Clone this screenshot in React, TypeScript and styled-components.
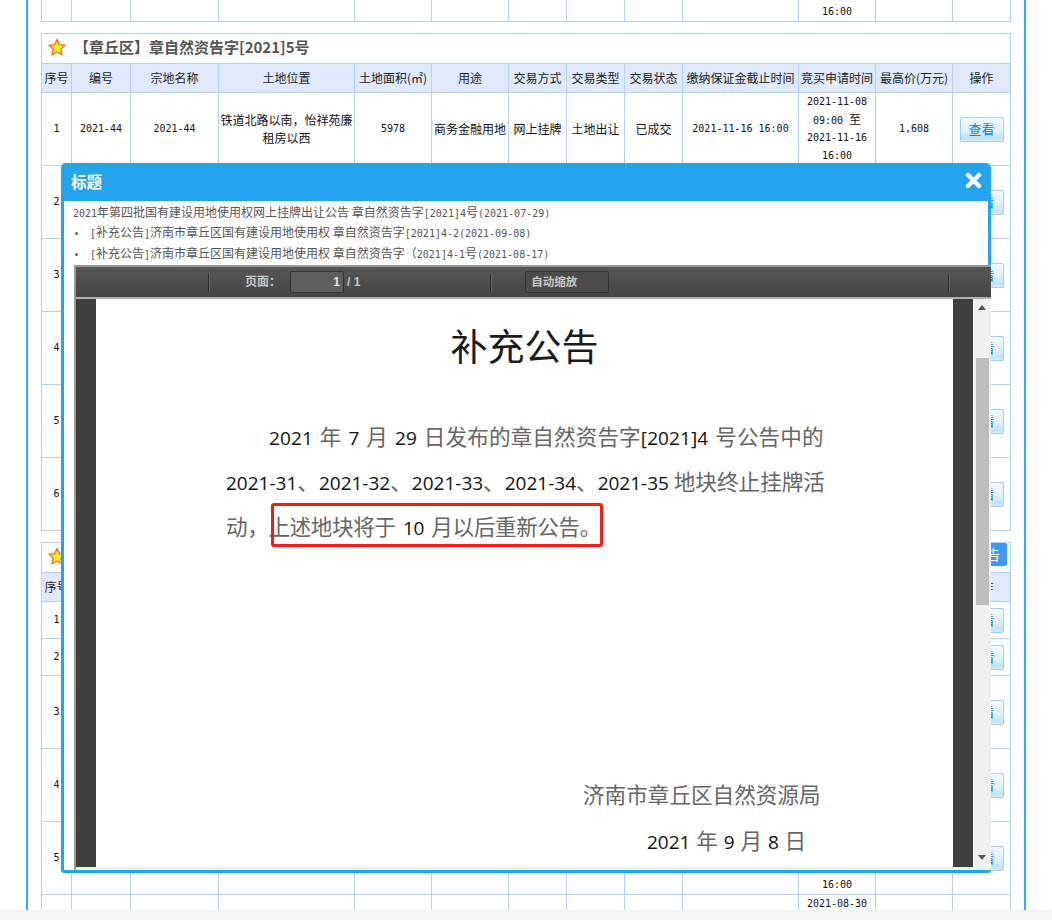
import React from 'react'
import styled, { createGlobalStyle } from 'styled-components'

const cjk = `"Noto Sans CJK SC", "Liberation Sans", sans-serif`
const lineBlue = '#b3d2f7'
const modalBlue = '#22a5ee'

const GlobalStyle = createGlobalStyle`
    html, body {
        margin: 0;
        padding: 0;
        background: #fff;
        font-family: ${cjk};
    }
`

const Screen = styled.div`
    position: relative;
    display: flex;
    flex-direction: column;
    width: 1052px;
    height: 920px;
    overflow: hidden;
`

const Main = styled.main`
    flex: 1;
    min-height: 0;
    overflow: hidden;
    box-sizing: border-box;
    margin: 0 26px;
    padding: 0 13px;
    border-left: 2px solid #2fb0fa;
    border-right: 2px solid #2fb0fa;
`

const BottomBar = styled.div`
    height: 10px;
    background: #f5f5f5;
`

const Section = styled.section<{ $clipped?: boolean }>`
    width: 970px;
    margin-top: ${p => (p.$clipped ? '-2px' : '0')};
    margin-bottom: 11px;
`

const TitleBar = styled.div`
    display: flex;
    align-items: center;
    box-sizing: border-box;
    height: 30px;
    padding: 0 3px 3px 6px;
    border: 1px solid ${lineBlue};
    border-bottom: none;
`

const Title = styled.h3`
    margin: 0 0 0 7px;
    font-size: 15px;
    font-weight: 700;
    line-height: 26px;
    color: #555;
`

const NoticeButton = styled.a`
    align-self: flex-start;
    margin-left: auto;
    height: 23px;
    padding: 0 7px;
    font-size: 14px;
    line-height: 23px;
    color: #fff;
    background: #3a9bfb;
    border-radius: 2px;
`

const Table = styled.table`
    width: 970px;
    table-layout: fixed;
    border-collapse: collapse;
`

const Row = styled.tr<{ $h: number }>`
    height: ${p => p.$h}px;
`

const Th = styled.th`
    padding: 0;
    border: 1px solid ${lineBlue};
    background: #dfe9fb;
    font-size: 12px;
    font-weight: 400;
    line-height: 18px;
    color: #222;
    text-align: center;
    white-space: nowrap;
    overflow: hidden;
`

const Td = styled.td<{ $num?: boolean; $bottom?: boolean }>`
    padding: 0;
    border: 1px solid ${lineBlue};
    font-family: ${p => (p.$num ? `"DejaVu Sans Mono", ${cjk}` : cjk)};
    font-size: ${p => (p.$num ? '10px' : '12px')};
    line-height: 18px;
    color: #111;
    text-align: center;
    vertical-align: ${p => (p.$bottom ? 'bottom' : 'middle')};
    white-space: nowrap;
    overflow: hidden;
`

const CellLine = styled.div`
    height: 18px;
    overflow: hidden;
`

const ZhInline = styled.span`
    font-family: ${cjk};
    font-size: 12px;
    line-height: 16px;
`

const ViewButton = styled.a`
    display: block;
    box-sizing: border-box;
    width: 44px;
    height: 25px;
    margin: 0 auto;
    border: 1px solid #9fd0f8;
    border-radius: 2px;
    background: linear-gradient(#f2f9fe 0%, #dff1fd 55%, #bfe1fa 90%, #dceffd 100%);
    font-family: ${cjk};
    font-size: 13px;
    line-height: 22px;
    color: #0a85d9;
`

const Modal = styled.div`
    position: absolute;
    top: 163px;
    left: 61px;
    display: flex;
    flex-direction: column;
    box-sizing: border-box;
    width: 930px;
    height: 710px;
    padding: 0 3px 3px;
    background: ${modalBlue};
    border-radius: 5px 5px 3px 3px;
`

const ModalHeader = styled.header`
    display: flex;
    align-items: center;
    justify-content: space-between;
    flex: none;
    box-sizing: border-box;
    height: 38px;
    padding: 0 6px 3px 7px;
    color: #fff;
`

const ModalTitle = styled.span`
    font-size: 15.5px;
    font-weight: 700;
    line-height: 20px;
`

const ModalBody = styled.div`
    flex: 1;
    min-height: 0;
    display: flex;
    flex-direction: column;
    background: #fff;
`

const Notices = styled.div`
    flex: none;
    box-sizing: border-box;
    height: 64px;
    padding: 0 0 0 9px;
    font-size: 12px;
    line-height: 21px;
    color: #555;
    white-space: nowrap;
`

const NoticeLine = styled.div`
    height: 21px;
    overflow: hidden;
`

const NoticeItem = styled(NoticeLine)`
    display: flex;
    align-items: center;

    &::before {
        content: '';
        flex: none;
        width: 3px;
        height: 3px;
        margin: 2px 12px 0 2px;
        border-radius: 50%;
        background: #666;
    }
`

const Mono = styled.span`
    font-family: "DejaVu Sans Mono", monospace;
    font-size: 10px;
`

const Frame = styled.div`
    flex: 1;
    min-height: 0;
    display: flex;
    flex-direction: column;
    margin: 0 -3px 0 10px;
    border-top: 2px solid #999;
    border-left: 2px solid #999;
    background: #fff;
`

const Toolbar = styled.div`
    flex: none;
    display: flex;
    align-items: center;
    box-sizing: border-box;
    height: 32px;
    border-bottom: 2px solid #b0b0b0;
    background: linear-gradient(#565656, #454545);
    font-size: 12px;
    line-height: 20px;
    color: #c8c8c8;
`

const Separator = styled.i<{ $left: number }>`
    flex: none;
    width: 1px;
    height: 17px;
    margin-left: ${p => p.$left}px;
    background: #2a2a2a;
    border-right: 1px solid #666;
`

const PageLabel = styled.span`
    margin-left: 35px;
    margin-top: -2px;
    font-weight: 700;
`

const PageInput = styled.div`
    box-sizing: border-box;
    width: 54px;
    height: 22px;
    margin-left: 9px;
    padding-right: 3px;
    border: 1px solid #333;
    border-radius: 2px;
    background: #5e5e5e;
    font-family: "Liberation Sans", sans-serif;
    font-weight: 700;
    line-height: 20px;
    text-align: right;
    color: #e4e4e4;
`

const PageCount = styled.span`
    margin-left: 3px;
    font-family: "Liberation Sans", sans-serif;
    font-weight: 700;
`

const ZoomSelect = styled.div`
    box-sizing: border-box;
    width: 84px;
    height: 22px;
    margin-left: 33px;
    padding-left: 5px;
    border: 1px solid #333;
    border-radius: 2px;
    background: #4c4c4c;
    font-weight: 700;
    font-size: 11.5px;
    line-height: 19px;
`

const Viewer = styled.div`
    flex: 1;
    min-height: 0;
    display: flex;
    border-bottom: 3px solid #eee;
`

const Gutter = styled.div`
    flex: none;
    width: 20px;
    background: #404040;
`

const Page = styled.div`
    position: relative;
    flex: 1;
    min-width: 0;
    padding-top: 24px;
    background: #fff;
    overflow: hidden;
`

const DocTitle = styled.h1`
    margin: 0;
    font-size: 37px;
    font-weight: 400;
    line-height: 44px;
    text-align: center;
    color: #1c1c1c;
`

const DocBody = styled.div`
    margin-top: 46px;
    padding-left: 130px;
`

const DocLine = styled.div<{ $indent?: number; $top?: number; $word?: number; $track?: number }>`
    height: 45px;
    margin-top: ${p => p.$top || 0}px;
    padding-left: ${p => p.$indent || 0}px;
    font-size: 21.6px;
    line-height: 45px;
    word-spacing: ${p => p.$word || 0}px;
    letter-spacing: ${p => p.$track || 0}px;
    color: #666;
    white-space: nowrap;
`

const Latin = styled.span`
    font-family: "Open Sans", sans-serif;
    font-size: 19px;
    line-height: 30px;
    color: #111;
`

const RedMark = styled.div`
    position: absolute;
    left: 175px;
    top: 204px;
    box-sizing: border-box;
    width: 332px;
    height: 44px;
    border: 3px solid #f21e14;
    border-radius: 3px;
`

const Scrollbar = styled.div`
    flex: none;
    display: flex;
    flex-direction: column;
    align-items: center;
    width: 18px;
    background: #f0f0f0;
`

const ArrowUp = styled.i`
    flex: none;
    width: 0;
    height: 0;
    margin-top: 6px;
    border: 4px solid transparent;
    border-top: none;
    border-bottom: 5px solid #555;
`

const ArrowDown = styled.i`
    flex: none;
    width: 0;
    height: 0;
    margin-top: auto;
    margin-bottom: 7px;
    border: 4px solid transparent;
    border-bottom: none;
    border-top: 5px solid #555;
`

const Thumb = styled.div`
    flex: none;
    width: 13px;
    height: 247px;
    margin-top: 48px;
    background: #bdbdbd;
`

const widths = [30, 59, 88, 136, 77, 77, 58, 58, 58, 116, 77, 77, 58]
const heads = ['序号', '编号', '宗地名称', '土地位置', '土地面积(㎡)', '用途', '交易方式', '交易类型', '交易状态', '缴纳保证金截止时间', '竞买申请时间', '最高价(万元)', '操作']

type Parcel = {
    h: number
    code: string
    place: string[]
    area: string
    use: string
    deadline: string
    time: string[]
    price: string
}

const fourLines = (from: string, to: string) => [from, '09:00 至', to, '16:00']

const parcels: Parcel[] = [
    { h: 73, code: '2021-44', place: ['铁道北路以南，怡祥苑廉', '租房以西'], area: '5978', use: '商务金融用地', deadline: '2021-11-16 16:00', time: fourLines('2021-11-08', '2021-11-16'), price: '1,608' },
    { h: 73, code: '2021-45', place: ['铁道北路以南'], area: '6120', use: '商务金融用地', deadline: '2021-11-16 16:00', time: fourLines('2021-11-08', '2021-11-16'), price: '1,650' },
    { h: 73, code: '2021-46', place: ['明水街道办事处'], area: '8340', use: '工业用地', deadline: '2021-11-16 16:00', time: fourLines('2021-11-08', '2021-11-16'), price: '520' },
    { h: 73, code: '2021-47', place: ['明水街道办事处'], area: '9215', use: '工业用地', deadline: '2021-11-16 16:00', time: fourLines('2021-11-08', '2021-11-16'), price: '575' },
    { h: 73, code: '2021-48', place: ['圣井街道办事处'], area: '7706', use: '工业用地', deadline: '2021-11-16 16:00', time: fourLines('2021-11-08', '2021-11-16'), price: '480' },
    { h: 73, code: '2021-49', place: ['圣井街道办事处'], area: '10233', use: '工业用地', deadline: '2021-11-16 16:00', time: fourLines('2021-11-08', '2021-11-16'), price: '640' },
]

const parcels4: Parcel[] = [
    { h: 37, code: '2021-31', place: ['终止挂牌'], area: '5210', use: '住宅用地', deadline: '-', time: ['-'], price: '-' },
    { h: 37, code: '2021-32', place: ['终止挂牌'], area: '6433', use: '住宅用地', deadline: '-', time: ['-'], price: '-' },
    { h: 73, code: '2021-33', place: ['双山街道办事处'], area: '8125', use: '住宅用地', deadline: '2021-09-07 16:00', time: fourLines('2021-08-30', '2021-09-07'), price: '2,310' },
    { h: 73, code: '2021-34', place: ['双山街道办事处'], area: '7450', use: '住宅用地', deadline: '2021-09-07 16:00', time: fourLines('2021-08-30', '2021-09-07'), price: '2,105' },
    { h: 73, code: '2021-35', place: ['双山街道办事处'], area: '6982', use: '住宅用地', deadline: '2021-09-07 16:00', time: fourLines('2021-08-30', '2021-09-07'), price: '1,980' },
    { h: 73, code: '2021-36', place: ['双山街道办事处'], area: '9004', use: '商业用地', deadline: '2021-09-07 16:00', time: fourLines('2021-08-30', '2021-09-07'), price: '2,560' },
]

const Star = () => (
    <svg width="19" height="19" viewBox="0 0 19 19">
        <defs>
            <radialGradient id="star-fill" cx="50%" cy="50%" r="55%">
                <stop offset="0%" stopColor="#f8f41a" />
                <stop offset="70%" stopColor="#fbe032" />
                <stop offset="100%" stopColor="#fbc675" />
            </radialGradient>
        </defs>
        <polygon
            points="9,1.5 11.4,6.6 17,7.3 12.9,11.1 14,16.8 9,14 4,16.8 5.1,11.1 1,7.3 6.6,6.6"
            fill="url(#star-fill)"
            stroke="#e8792d"
            strokeWidth="1.4"
            strokeLinejoin="round"
        />
    </svg>
)

const CloseIcon = () => (
    <svg width="17" height="17" viewBox="0 0 17 17">
        <path d="M3 3 L14 14 M14 3 L3 14" stroke="#fff" strokeWidth="4.4" strokeLinecap="round" />
    </svg>
)

const Cols = () => (
    <colgroup>
        {widths.map((w, i) => (
            <col key={i} style={{ width: w }} />
        ))}
    </colgroup>
)

const Head = () => (
    <thead>
        <Row $h={29}>
            {heads.map(h => (
                <Th key={h}>{h}</Th>
            ))}
        </Row>
    </thead>
)

const ParcelRows = ({ rows }: { rows: Parcel[] }) => (
    <tbody>
        {rows.map((r, i) => (
            <Row $h={r.h} key={r.code}>
                <Td $num>{i + 1}</Td>
                <Td $num>{r.code}</Td>
                <Td $num>{r.code}</Td>
                <Td>
                    {r.place.map(t => (
                        <CellLine key={t}>{t}</CellLine>
                    ))}
                </Td>
                <Td $num>{r.area}</Td>
                <Td>{r.use}</Td>
                <Td>网上挂牌</Td>
                <Td>土地出让</Td>
                <Td>已成交</Td>
                <Td $num>{r.deadline}</Td>
                <Td $num>
                    {r.time.map((t, k) => (
                        <CellLine key={k}>{t.endsWith('至') ? <>09:00 <ZhInline>至</ZhInline></> : t}</CellLine>
                    ))}
                </Td>
                <Td $num>{r.price}</Td>
                <Td>
                    <ViewButton>查看</ViewButton>
                </Td>
            </Row>
        ))}
    </tbody>
)

const App = () => (
    <Screen>
        <GlobalStyle />
        <Main>
            <Section $clipped>
                <Table>
                    <Cols />
                    <tbody>
                        <Row $h={23}>
                            {widths.map((_, i) => (
                                <Td $num $bottom key={i}>
                                    {i === 10 ? '16:00' : ''}
                                </Td>
                            ))}
                        </Row>
                    </tbody>
                </Table>
            </Section>
            <Section>
                <TitleBar>
                    <Star />
                    <Title>【章丘区】章自然资告字[2021]5号</Title>
                </TitleBar>
                <Table>
                    <Cols />
                    <Head />
                    <ParcelRows rows={parcels} />
                </Table>
            </Section>
            <Section>
                <TitleBar>
                    <Star />
                    <Title>【章丘区】章自然资告字[2021]4号</Title>
                    <NoticeButton>查看公告</NoticeButton>
                </TitleBar>
                <Table>
                    <Cols />
                    <Head />
                    <ParcelRows rows={parcels4} />
                </Table>
            </Section>
        </Main>
        <BottomBar />
        <Modal>
            <ModalHeader>
                <ModalTitle>标题</ModalTitle>
                <CloseIcon />
            </ModalHeader>
            <ModalBody>
                <Notices>
                    <NoticeLine>
                        <Mono>2021</Mono>年第四批国有建设用地使用权网上挂牌出让公告 <Mono>  </Mono>章自然资告字<Mono>[2021]4</Mono>号<Mono>(2021-07-29)</Mono>
                    </NoticeLine>
                    <NoticeItem>
                        <span>
                            <Mono>[</Mono>补充公告<Mono>]</Mono>济南市章丘区国有建设用地使用权 <Mono> </Mono>章自然资告字<Mono>[2021]4-2(2021-09-08)</Mono>
                        </span>
                    </NoticeItem>
                    <NoticeItem>
                        <span>
                            <Mono>[</Mono>补充公告<Mono>]</Mono>济南市章丘区国有建设用地使用权 <Mono> </Mono>章自然资告字（<Mono>2021]4-1</Mono>号<Mono>(2021-08-17)</Mono>
                        </span>
                    </NoticeItem>
                </Notices>
                <Frame>
                    <Toolbar>
                        <Separator $left={132} />
                        <PageLabel>页面：</PageLabel>
                        <PageInput>1</PageInput>
                        <PageCount>/ 1</PageCount>
                        <Separator $left={130} />
                        <ZoomSelect>自动缩放</ZoomSelect>
                        <Separator $left={339} />
                    </Toolbar>
                    <Viewer>
                        <Gutter />
                        <Page>
                            <DocTitle>补充公告</DocTitle>
                            <DocBody>
                                <DocLine $indent={43} $word={2} $track={0.1}>
                                    <Latin>2021</Latin> 年 <Latin>7</Latin> 月 <Latin>29</Latin> 日发布的章自然资告字<Latin>[2021]4</Latin> 号公告中的
                                </DocLine>
                                <DocLine>
                                    <Latin>2021-31</Latin>、<Latin>2021-32</Latin>、<Latin>2021-33</Latin>、<Latin>2021-34</Latin>、<Latin>2021-35</Latin> 地块终止挂牌活
                                </DocLine>
                                <DocLine $track={-0.4} $word={3}>
                                    动，上述地块将于 <Latin>10</Latin> 月以后重新公告。
                                </DocLine>
                                <DocLine $indent={357} $top={223}>
                                    济南市章丘区自然资源局
                                </DocLine>
                                <DocLine $indent={421} $top={1} $word={1}>
                                    <Latin>2021</Latin> 年 <Latin>9</Latin> 月 <Latin>8</Latin> 日
                                </DocLine>
                            </DocBody>
                            <RedMark />
                        </Page>
                        <Gutter />
                        <Scrollbar>
                            <ArrowUp />
                            <Thumb />
                            <ArrowDown />
                        </Scrollbar>
                    </Viewer>
                </Frame>
            </ModalBody>
        </Modal>
    </Screen>
)

export default App
